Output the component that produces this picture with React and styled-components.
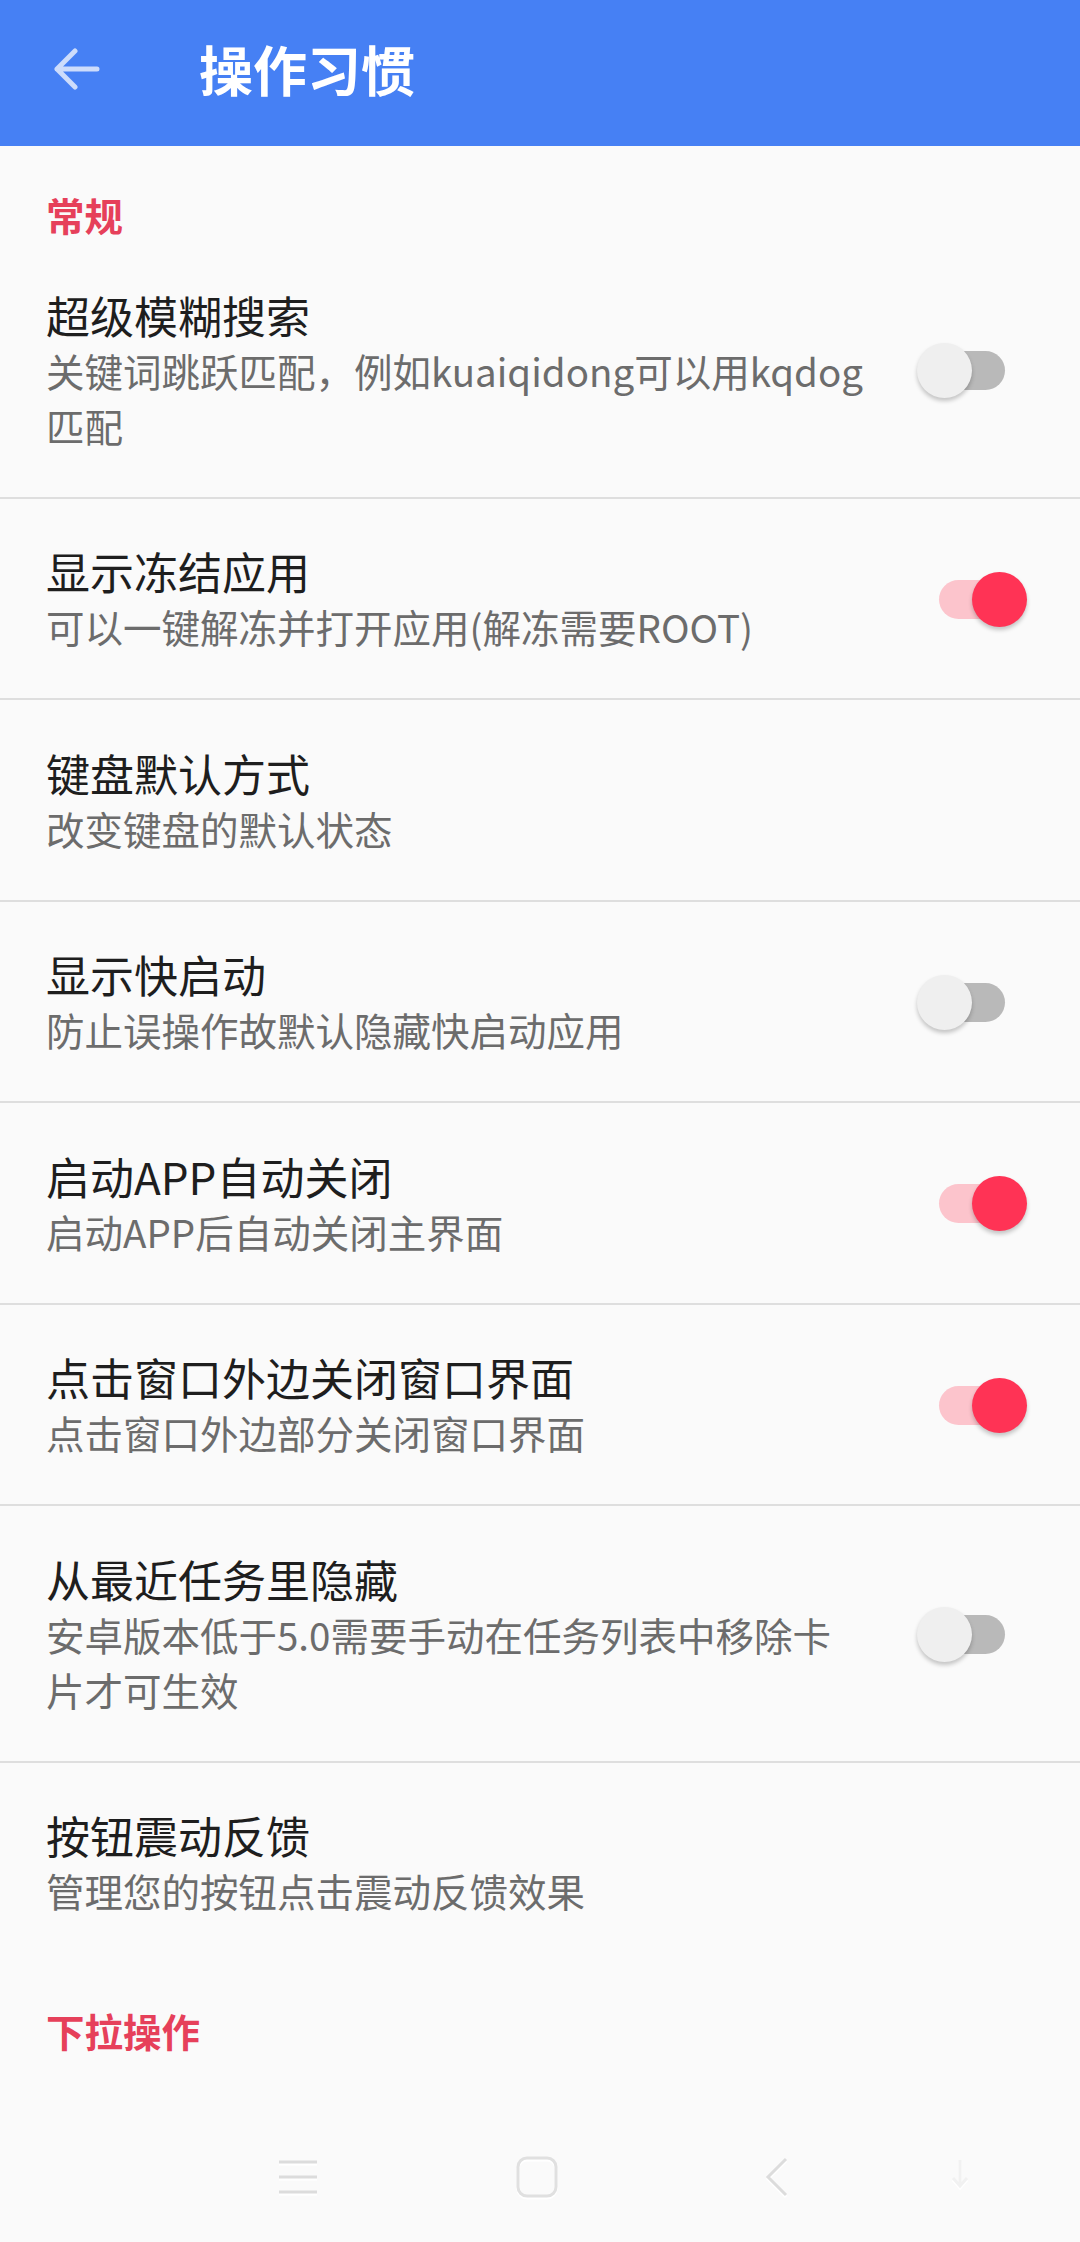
import React from 'react';
import styled, { createGlobalStyle } from 'styled-components';

const Global = createGlobalStyle`
  html, body { margin: 0; padding: 0; background: #fafafa; }
  body { font-family: "Noto Sans CJK SC", "Noto Sans", sans-serif; }
  * { box-sizing: border-box; }
`;

const Page = styled.div`
  width: 1080px;
  min-height: 2242px;
  display: flex;
  flex-direction: column;
  background: #fafafa;
`;

const Toolbar = styled.header`
  height: 146px;
  background: #4680f4;
  display: flex;
  align-items: center;
  padding: 0 0 8px 50px;
`;

const BackBtn = styled.div`
  width: 54px;
  height: 54px;
  display: flex;
  align-items: center;
  justify-content: center;
`;

const Title = styled.h1`
  margin: 0 0 0 95px;
  font-size: 54px;
  line-height: 60px;
  font-weight: 700;
  color: #ffffff;
`;

const SectionTitle = styled.div`
  padding: 41px 46px 0;
  font-size: 38.5px;
  line-height: 55px;
  font-weight: 700;
  color: #e6405a;
`;

const Row = styled.div`
  display: flex;
  align-items: center;
  padding: 45.5px 53px 44px 46px;
  border-bottom: ${p => (p.$last ? 'none' : '2px solid #dedede')};
`;

const TextBlock = styled.div`
  flex: 1;
  min-width: 0;
  display: flex;
  flex-direction: column;
`;

const ItemTitle = styled.div`
  font-size: 44px;
  line-height: 55px;
  color: #1e1e1e;
`;

const ItemSub = styled.div`
  font-size: 38.5px;
  line-height: 55px;
  color: #6c6c6c;
`;

const SwitchBox = styled.div`
  position: relative;
  flex: none;
  width: 110px;
  height: 55px;
  margin-left: 49px;
`;

const Track = styled.div`
  position: absolute;
  left: 22px;
  right: 22px;
  top: 8px;
  height: 39px;
  border-radius: 20px;
  background: ${p => (p.$on ? '#fcc4cc' : '#b9b9b9')};
`;

const Thumb = styled.div`
  position: absolute;
  top: 0;
  left: ${p => (p.$on ? '55px' : '0')};
  width: 55px;
  height: 55px;
  border-radius: 50%;
  background: ${p => (p.$on ? '#ff3355' : '#efefef')};
  box-shadow: 0 3px 4px rgba(0, 0, 0, 0.22);
`;

const NavBar = styled.nav`
  margin-top: auto;
  height: 130px;
  display: flex;
  align-items: center;
  padding-left: 268px;
`;

const NavSlot = styled.div`
  width: 60px;
  height: 60px;
  display: flex;
  align-items: center;
  justify-content: center;
  margin-left: ${p => p.$gap || 0}px;
  filter: drop-shadow(0 2px 0 #ffffff);
`;

const Switch = ({ on }) => (
  <SwitchBox>
    <Track $on={on} />
    <Thumb $on={on} />
  </SwitchBox>
);

const items = [
  { t: '超级模糊搜索', s: '关键词跳跃匹配，例如kuaiqidong可以用kqdog匹配', sw: false },
  { t: '显示冻结应用', s: '可以一键解冻并打开应用(解冻需要ROOT)', sw: true },
  { t: '键盘默认方式', s: '改变键盘的默认状态' },
  { t: '显示快启动', s: '防止误操作故默认隐藏快启动应用', sw: false },
  { t: '启动APP自动关闭', s: '启动APP后自动关闭主界面', sw: true },
  { t: '点击窗口外边关闭窗口界面', s: '点击窗口外边部分关闭窗口界面', sw: true },
  { t: '从最近任务里隐藏', s: '安卓版本低于5.0需要手动在任务列表中移除卡片才可生效', sw: false },
  { t: '按钮震动反馈', s: '管理您的按钮点击震动反馈效果' },
];

export default function App() {
  return (
    <Page>
      <Global />
      <Toolbar>
        <BackBtn>
          <svg width="46" height="42" viewBox="0 0 46 42" fill="none">
            <path d="M3 21 H43 M21 3 L3 21 L21 39" stroke="#cddcfb" strokeWidth="5" strokeLinecap="round" strokeLinejoin="round" />
          </svg>
        </BackBtn>
        <Title>操作习惯</Title>
      </Toolbar>
      <SectionTitle>常规</SectionTitle>
      {items.map((it, i) => (
        <Row key={it.t} $last={i === items.length - 1}>
          <TextBlock>
            <ItemTitle>{it.t}</ItemTitle>
            <ItemSub>{it.s}</ItemSub>
          </TextBlock>
          {it.sw !== undefined && <Switch on={it.sw} />}
        </Row>
      ))}
      <SectionTitle>下拉操作</SectionTitle>
      <NavBar>
        <NavSlot>
          <svg width="40" height="36" viewBox="0 0 40 36">
            <path d="M1 3 H39 M1 18 H39 M1 33 H39" stroke="#dcdcdc" strokeWidth="3" />
          </svg>
        </NavSlot>
        <NavSlot $gap={179}>
          <svg width="42" height="42" viewBox="0 0 42 42">
            <rect x="2" y="2" width="38" height="38" rx="9" fill="none" stroke="#e0e0e0" strokeWidth="3" />
          </svg>
        </NavSlot>
        <NavSlot $gap={180}>
          <svg width="30" height="42" viewBox="0 0 30 42">
            <polyline points="24,3 6,21 24,39" fill="none" stroke="#dcdcdc" strokeWidth="3" />
          </svg>
        </NavSlot>
        <NavSlot $gap={123}>
          <svg width="30" height="42" viewBox="0 0 30 42">
            <path d="M15 4 V30 M8 22 L15 30 L22 22" fill="none" stroke="#f1f1f1" strokeWidth="3" />
          </svg>
        </NavSlot>
      </NavBar>
    </Page>
  );
}
